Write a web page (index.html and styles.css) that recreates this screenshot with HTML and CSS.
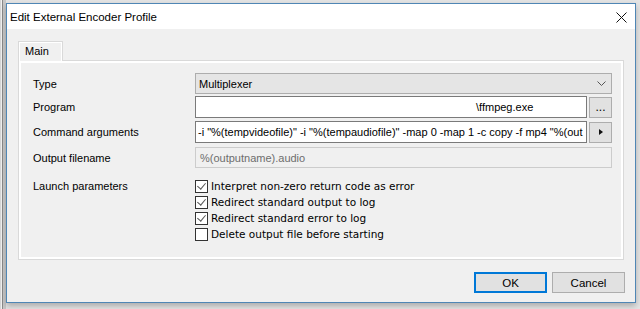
FILE: index.html
```html
<!DOCTYPE html>
<html lang="en">
<head>
    <meta charset="UTF-8">
    <meta name="viewport" content="width=device-width, initial-scale=1.0">
    <title>Edit External Encoder Profile</title>
    <link rel="stylesheet" href="styles.css">
</head>
<body>
    <div class="dialog">
        <div class="titlebar">
            <span class="title">Edit External Encoder Profile</span>
            <svg class="close" width="11" height="11" viewBox="0 0 11 11">
                <path d="M0.5 0.5 L10.5 10.5 M10.5 0.5 L0.5 10.5" stroke="#111" stroke-width="1" fill="none"/>
            </svg>
        </div>

        <div class="body">
            <div class="tabs">
                <div class="tab">Main</div>
            </div>
            <div class="page">
                <div class="row row-type">
                    <div class="label">Type</div>
                    <div class="combo">
                        <span>Multiplexer</span>
                        <svg width="9" height="5" viewBox="0 0 9 5">
                            <path d="M0.5 0.5 L4.5 4.5 L8.5 0.5" stroke="#555" stroke-width="1" fill="none"/>
                        </svg>
                    </div>
                </div>
                <div class="row row-program">
                    <div class="label">Program</div>
                    <div class="field">
                        <div class="textbox program-path">\ffmpeg.exe</div>
                        <button class="small-btn browse">...</button>
                    </div>
                </div>
                <div class="row row-args">
                    <div class="label">Command arguments</div>
                    <div class="field">
                        <div class="textbox">-i "%(tempvideofile)" -i "%(tempaudiofile)" -map 0 -map 1 -c copy -f mp4 "%(out</div>
                        <button class="small-btn">
                            <svg width="4" height="6" viewBox="0 0 4 6"><path d="M0 0 L4 3 L0 6 Z" fill="#111"/></svg>
                        </button>
                    </div>
                </div>
                <div class="row row-output">
                    <div class="label">Output filename</div>
                    <div class="textbox disabled">%(outputname).audio</div>
                </div>
                <div class="row row-launch">
                    <div class="label">Launch parameters</div>
                    <div class="checks">
                        <label class="check"><span class="box checked"></span>Interpret non-zero return code as error</label>
                        <label class="check"><span class="box checked"></span>Redirect standard output to log</label>
                        <label class="check"><span class="box checked"></span>Redirect standard error to log</label>
                        <label class="check"><span class="box"></span>Delete output file before starting</label>
                    </div>
                </div>
            </div>

            <div class="footer">
                <button class="btn default">OK</button>
                <button class="btn">Cancel</button>
            </div>
        </div>
    </div>
</body>
</html>
```

FILE: styles.css
```css
body {
    margin: 0;
    padding: 3px 4px 0 6px;
    height: 309px;
    box-sizing: border-box;
    overflow: hidden;
    background-color: #e4e4e4;
    background-image: linear-gradient(to right, #d6d6d6 0, #d6d6d6 1px, #f2f2f2 1px, #f2f2f2 2px, #8a8a8a 2px, #8a8a8a 3px, #c8c8c8 3px, #c8c8c8 6px, transparent 6px);
    font-family: "Liberation Sans", Arial, sans-serif;
    font-size: 11px;
    color: #000;
}

.dialog {
    width: 630px;
    height: 300px;
    box-sizing: border-box;
    border: 1px solid #4f86b5;
    background-color: #f0f0f0;
    display: flex;
    flex-direction: column;
    box-shadow: 0 3px 6px rgba(0, 0, 0, 0.25);
}

.titlebar {
    height: 25px;
    background-color: #fff;
    display: flex;
    align-items: center;
    justify-content: space-between;
    padding: 0 8px 0 3px;
}

.title {
    font-size: 11.5px;
    padding-top: 1px;
}

.close {
    margin-top: 1px;
}

.body {
    flex: 1;
    padding: 12px 10px 0 11px;
    display: flex;
    flex-direction: column;
}

.tabs {
    display: flex;
    position: relative;
    z-index: 1;
}

.tab {
    width: 45px;
    height: 20px;
    box-sizing: border-box;
    border: 1px solid #d9d9d9;
    border-bottom: none;
    box-shadow: inset 1px 1px 0 #fff, inset -1px 0 0 #fff;
    background-color: #f0f0f0;
    padding: 3px 0 0 6px;
}

.page {
    width: 606px;
    height: 200px;
    box-sizing: border-box;
    margin-top: -1px;
    border: 1px solid #d9d9d9;
    box-shadow: inset 0 0 0 2px #fff;
    padding: 12px 11px 0 14px;
}

.row {
    display: flex;
    align-items: center;
}

.label {
    width: 162px;
    flex: none;
}

.row-type { height: 21px; margin-bottom: 2px; }
.row-program { height: 22px; margin-bottom: 3px; }
.row-args { height: 22px; margin-bottom: 4px; }
.row-output { height: 21px; margin-bottom: 10px; }
.row-launch { align-items: flex-start; }
.row-launch .label { padding-top: 2px; }

.combo {
    flex: 1;
    height: 21px;
    box-sizing: border-box;
    border: 1px solid #adadad;
    background-color: #e5e5e5;
    display: flex;
    align-items: center;
    justify-content: space-between;
    padding: 0 5px 0 3px;
}

.field {
    flex: 1;
    min-width: 0;
    display: flex;
    align-items: center;
    gap: 2px;
    height: 100%;
}

.textbox {
    flex: 1;
    min-width: 0;
    height: 100%;
    box-sizing: border-box;
    border: 1px solid #7a7a7a;
    background-color: #fff;
    padding: 0 2px;
    display: flex;
    align-items: center;
    white-space: nowrap;
    overflow: hidden;
}

.program-path {
    padding-left: 280px;
}

.textbox.disabled {
    border-color: #cccccc;
    background-color: #f0f0f0;
    color: #6d6d6d;
    padding-left: 4px;
}

.small-btn {
    width: 23px;
    height: 21px;
    flex: none;
    border: 1px solid #adadad;
    background-color: #e1e1e1;
    font-family: inherit;
    font-size: 12px;
    padding: 0;
    display: flex;
    align-items: center;
    justify-content: center;
}

.small-btn.browse {
    align-items: flex-end;
    padding-bottom: 3px;
}

.checks {
    display: flex;
    flex-direction: column;
    font-family: "DejaVu Sans", Verdana, sans-serif;
    font-size: 10.5px;
}

.check {
    height: 16px;
    display: flex;
    align-items: center;
    gap: 3px;
}

.box {
    width: 13px;
    height: 13px;
    box-sizing: border-box;
    border: 1px solid #333;
    background-color: #fff;
    position: relative;
}

.box.checked::after {
    content: "";
    position: absolute;
    left: 3px;
    top: 0px;
    width: 4px;
    height: 7px;
    border-right: 1px solid #555;
    border-bottom: 1px solid #555;
    transform: rotate(40deg);
}

.footer {
    display: flex;
    justify-content: flex-end;
    gap: 5px;
    margin-top: 12px;
}

.btn {
    width: 73px;
    height: 21px;
    box-sizing: border-box;
    border: 1px solid #adadad;
    background-color: #e1e1e1;
    font-family: inherit;
    font-size: 11.5px;
    padding: 0;
}

.btn.default {
    border: 2px solid #0078d7;
}
```
